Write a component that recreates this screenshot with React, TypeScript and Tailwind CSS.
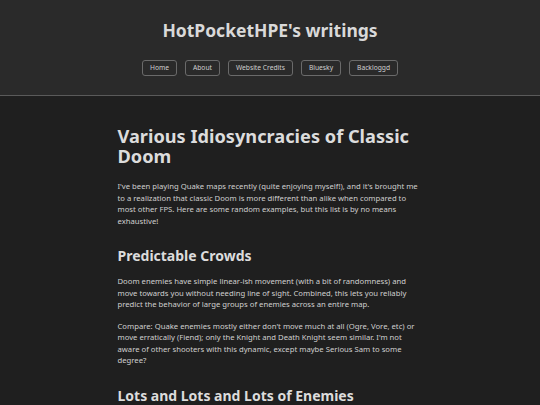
import React from "react";

const links = ["Home", "About", "Website Credits", "Bluesky", "Backloggd"];

export default function App() {
  return (
    <div
      className="min-h-screen bg-[#1f1f1f] text-[#cfcfcf]"
      style={{ fontFamily: '"Noto Sans", "Open Sans", sans-serif' }}
    >
      <header className="bg-[#2a2a2a] border-b border-[#5a5a5a] pt-[18px] pb-[19px]">
        <h1 className="text-center text-[17.5px] leading-[24px] font-bold text-[#d9d9d9]">
          HotPocketHPE's writings
        </h1>
        <nav className="mt-[18px] flex justify-center gap-[8px]">
          {links.map((l) => (
            <a
              key={l}
              href="#"
              className="h-[16px] px-[7px] flex items-center rounded-[3px] border border-[#6a6a6a] text-[6.7px] text-[#d0d0d0]"
            >
              {l}
            </a>
          ))}
        </nav>
      </header>
      <main className="w-[305px] mx-auto pt-[30px]">
        <h2 className="text-[18.2px] leading-[20px] font-bold text-[#dcdcdc]">
          Various Idiosyncracies of Classic Doom
        </h2>
        <p className="mt-[15px] text-[7.7px] leading-[11.5px]">
          I've been playing Quake maps recently (quite enjoying myself!), and it's brought me to a realization that classic Doom is more different than alike when compared to most other FPS. Here are some random examples, but this list is by no means exhaustive!
        </p>
        <h3 className="mt-[20px] text-[14px] leading-[18px] font-bold text-[#dcdcdc]">
          Predictable Crowds
        </h3>
        <p className="mt-[11px] text-[7.7px] leading-[11.5px]">
          Doom enemies have simple linear-ish movement (with a bit of randomness) and move towards you without needing line of sight. Combined, this lets you reliably predict the behavior of large groups of enemies across an entire map.
        </p>
        <p className="mt-[10px] text-[7.7px] leading-[11.5px]">
          Compare: Quake enemies mostly either don't move much at all (Ogre, Vore, etc) or move erratically (Fiend); only the Knight and Death Knight seem similar. I'm not aware of other shooters with this dynamic, except maybe Serious Sam to some degree?
        </p>
        <h3 className="mt-[20px] text-[14px] leading-[18px] font-bold text-[#dcdcdc]">
          Lots and Lots and Lots of Enemies
        </h3>
      </main>
    </div>
  );
}
